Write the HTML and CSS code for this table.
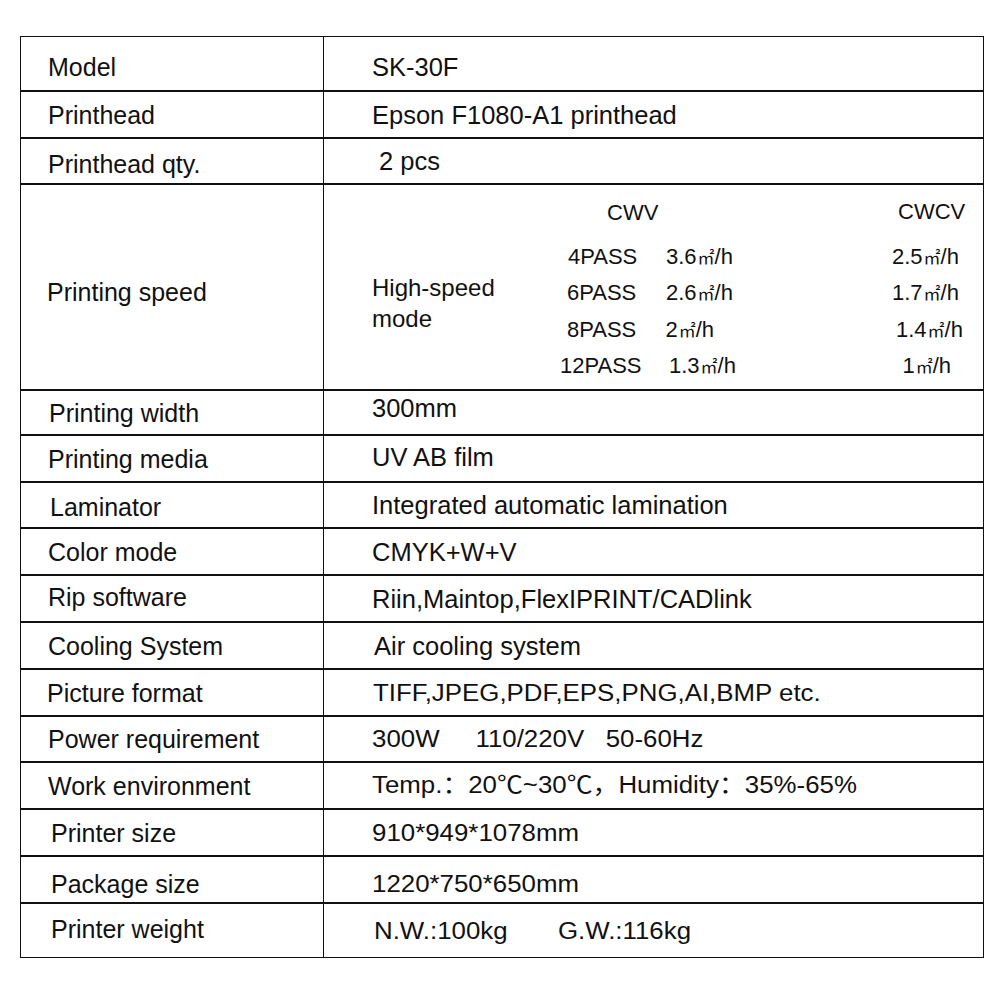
FILE: index.html
```html
<!DOCTYPE html>
<html>
<head>
<meta charset="utf-8">
<link rel="stylesheet" href="styles.css">
</head>
<body>
<div class="page">
  <div class="spec">
    <div class="row h55 lo6">
      <div class="k">Model</div>
      <div class="v">SK-30F</div>
    </div>
    <div class="row h47">
      <div class="k">Printhead</div>
      <div class="v">Epson F1080-A1 printhead</div>
    </div>
    <div class="row h46">
      <div class="k lo6">Printhead qty.</div>
      <div class="v pad55">2 pcs</div>
    </div>
    <div class="row h206">
      <div class="k xm1 speed-k">Printing speed</div>
      <div class="v speed">
        <div class="mode">High-speed<br>mode</div>
        <div class="sp-grid">
          <div class="sp-h cwv">CWV</div>
          <div class="sp-h cwcv">CWCV</div>
          <div class="i8">4PASS</div><div class="i4">3.6<span class="m2">㎡</span>/h</div><div class="i6">2.5<span class="m2">㎡</span>/h</div>
          <div class="i7">6PASS</div><div class="i4">2.6<span class="m2">㎡</span>/h</div><div class="i6">1.7<span class="m2">㎡</span>/h</div>
          <div class="i7">8PASS</div><div class="i3">2<span class="m2">㎡</span>/h</div><div class="i10">1.4<span class="m2">㎡</span>/h</div>
          <div class="i0">12PASS</div><div class="i7">1.3<span class="m2">㎡</span>/h</div><div class="i17">1<span class="m2">㎡</span>/h</div>
        </div>
      </div>
    </div>
    <div class="row h45">
      <div class="k x1">Printing width</div>
      <div class="v hi9">300mm</div>
    </div>
    <div class="row h47">
      <div class="k">Printing media</div>
      <div class="v hi4">UV AB film</div>
    </div>
    <div class="row h46">
      <div class="k x2 lo3">Laminator</div>
      <div class="v">Integrated automatic lamination</div>
    </div>
    <div class="row h47">
      <div class="k">Color mode</div>
      <div class="v">CMYK+W+V</div>
    </div>
    <div class="row h47">
      <div class="k hi4">Rip software</div>
      <div class="v">Riin,Maintop,FlexIPRINT/CADlink</div>
    </div>
    <div class="row h47">
      <div class="k">Cooling System</div>
      <div class="v pad50">Air cooling system</div>
    </div>
    <div class="row h47">
      <div class="k xm1">Picture format</div>
      <div class="v pad49"><span class="wide">TIFF,JPEG,PDF,EPS,PNG,AI,BMP etc.</span></div>
    </div>
    <div class="row h46">
      <div class="k">Power requirement</div>
      <div class="v"><span class="wide">300W     110/220V   50-60Hz</span></div>
    </div>
    <div class="row h47">
      <div class="k">Work environment</div>
      <div class="v hi2"><span class="wide">Temp.：20℃~30℃，Humidity：35%-65%</span></div>
    </div>
    <div class="row h47">
      <div class="k x3">Printer size</div>
      <div class="v"><span class="wide">910*949*1078mm</span></div>
    </div>
    <div class="row h47 lo8">
      <div class="k x3">Package size</div>
      <div class="v"><span class="wide">1220*750*650mm</span></div>
    </div>
    <div class="row h53">
      <div class="k x3 hi3">Printer weight</div>
      <div class="v pad50"><span class="wide">N.W.:100kg       G.W.:116kg</span></div>
    </div>
  </div>
</div>
</body>
</html>
```
FILE: styles.css
```css
html, body {
  margin: 0;
  padding: 0;
  background: #fff;
}

body {
  font-family: "Liberation Sans", Arial, "Noto Sans CJK SC", sans-serif;
  color: #111;
}

.page {
  padding: 36px 0 0 20px;
}

.spec {
  width: 964px;
  box-sizing: border-box;
  border: 1px solid #111;
}

.row {
  display: grid;
  grid-template-columns: 302px 1fr;
  box-sizing: border-box;
  border-bottom: 2px solid #111;
}

.row:last-child {
  border-bottom: 0;
}

.h45 { height: 45px; }
.h46 { height: 46px; }
.h47 { height: 47px; }
.h53 { height: 53px; }
.h55 { height: 55px; }
.h206 { height: 206px; }

.k {
  display: flex;
  align-items: center;
  padding-left: 27px;
  font-size: 25px;
  line-height: 30px;
  white-space: nowrap;
}

.v {
  display: flex;
  align-items: center;
  border-left: 1px solid #111;
  padding-left: 48px;
  font-size: 25.5px;
  line-height: 30px;
  white-space: pre;
}

.x1 { padding-left: 28px; }
.x2 { padding-left: 29px; }
.x3 { padding-left: 30px; }
.xm1 { padding-left: 26px; }

.pad49 { padding-left: 49px; }
.pad50 { padding-left: 50px; }
.pad55 { padding-left: 55px; }

/* vertical nudges: padding shifts the centred text */
.lo3 { padding-top: 3px; }
.lo6 > .k, .lo6 > .v, .k.lo6 { padding-top: 6px; }
.lo8 > .k, .lo8 > .v { padding-top: 8px; }
.hi2 { padding-bottom: 2px; }
.hi3 { padding-bottom: 3px; }
.hi4 { padding-bottom: 4px; }
.hi9 { padding-bottom: 9px; }

.wide {
  display: inline-block;
  font-size: 23.5px;
  line-height: 30px;
  transform: scaleX(1.1);
  transform-origin: 0 50%;
  white-space: pre;
}

/* printing speed row */
.speed-k {
  padding-top: 9px;
}

.v.speed {
  align-items: flex-start;
  padding-top: 8px;
  font-size: 22px;
}

.mode {
  width: 188px;
  flex: none;
  padding-top: 80px;
  font-size: 24px;
  line-height: 30.6px;
  white-space: nowrap;
}

.sp-grid {
  display: grid;
  grid-template-columns: 102px 224px 1fr;
  grid-template-rows: 46px repeat(4, 36.3px);
  line-height: 36.3px;
  font-size: 22px;
  white-space: nowrap;
}

.sp-h {
  align-self: start;
  padding-top: 2px;
}

.cwv {
  grid-column: 1 / 3;
  padding-left: 47px;
}

.cwcv {
  grid-column: 3;
  padding-left: 12px;
  padding-top: 1px;
}

.m2 {
  font-family: "Noto Sans CJK SC", sans-serif;
  font-size: 17px;
  padding-left: 1px;
}

.i0 { padding-left: 0; }
.i3 { padding-left: 3.5px; }
.i4 { padding-left: 4px; }
.i6 { padding-left: 6px; }
.i7 { padding-left: 7px; }
.i8 { padding-left: 8px; }
.i10 { padding-left: 10px; }
.i17 { padding-left: 16.5px; }
```
